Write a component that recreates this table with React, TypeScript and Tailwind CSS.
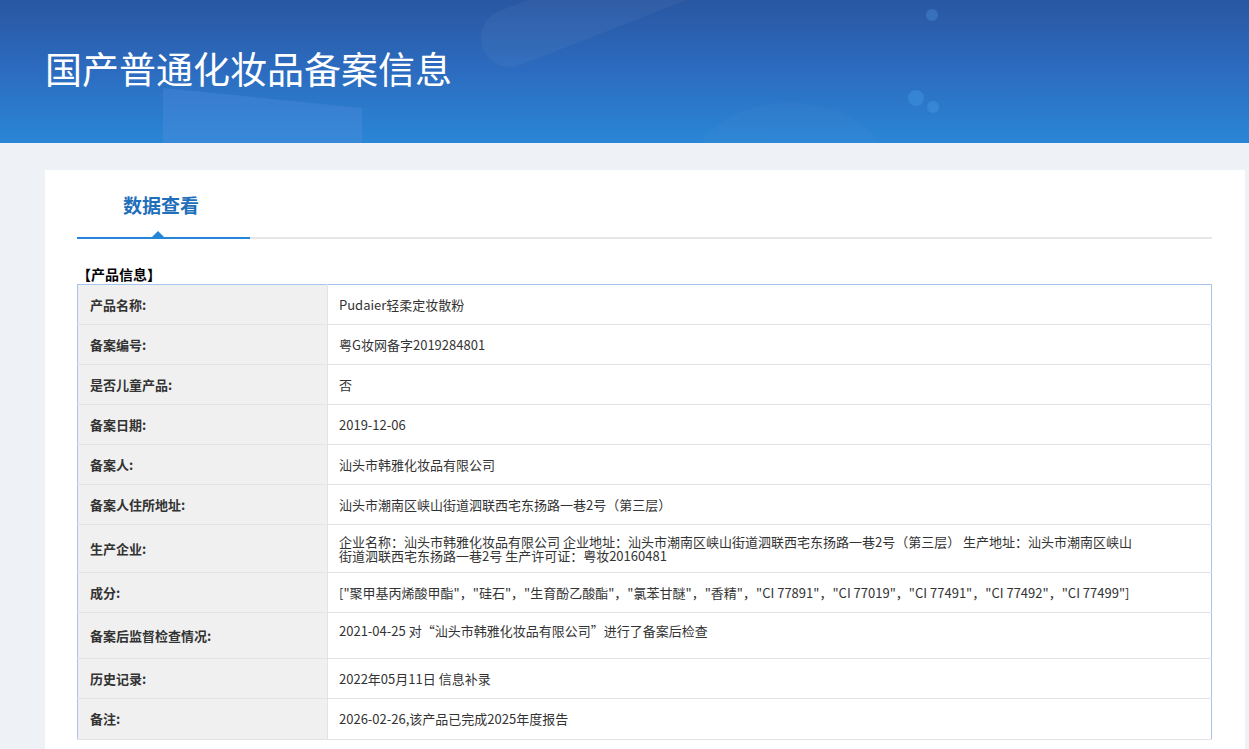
import React from 'react';

// Rows of the product record
const rows: { label: string; value: React.ReactNode; h?: string; top?: boolean }[] = [
  { label: '产品名称:', value: 'Pudaier轻柔定妆散粉' },
  { label: '备案编号:', value: '粤G妆网备字2019284801' },
  { label: '是否儿童产品:', value: '否' },
  { label: '备案日期:', value: '2019-12-06' },
  { label: '备案人:', value: '汕头市韩雅化妆品有限公司' },
  { label: '备案人住所地址:', value: '汕头市潮南区峡山街道泗联西宅东扬路一巷2号（第三层）' },
  {
    label: '生产企业:',
    value:
      '企业名称：汕头市韩雅化妆品有限公司 企业地址：汕头市潮南区峡山街道泗联西宅东扬路一巷2号（第三层） 生产地址：汕头市潮南区峡山街道泗联西宅东扬路一巷2号 生产许可证：粤妆20160481',
    h: 'h-[48px]',
  },
  {
    label: '成分:',
    value:
      '["聚甲基丙烯酸甲酯"，"硅石"，"生育酚乙酸酯"，"氯苯甘醚"，"香精"，"CI 77891"，"CI 77019"，"CI 77491"，"CI 77492"，"CI 77499"]',
  },
  {
    label: '备案后监督检查情况:',
    value: '2021-04-25 对“汕头市韩雅化妆品有限公司”进行了备案后检查',
    h: 'h-[46px]',
    top: true,
  },
  { label: '历史记录:', value: '2022年05月11日 信息补录' },
  { label: '备注:', value: '2026-02-26,该产品已完成2025年度报告', h: 'h-[41px]' },
];

function Header() {
  return (
    <div className="relative h-[143px] overflow-hidden bg-gradient-to-b from-[#2957a2] via-[#2c6cc0] to-[#2a86d6]">
      {/* faint background art */}
      <svg className="absolute inset-0" width="1249" height="143" viewBox="0 0 1249 143">
        <line x1="510" y1="38" x2="760" y2="-60" stroke="#ffffff" strokeWidth="58" strokeLinecap="round" opacity="0.035" />
        <polygon points="163,88 362,108 362,143 163,143" fill="#5a93e2" opacity="0.3" />
        <ellipse cx="790" cy="165" rx="95" ry="62" fill="#ffffff" opacity="0.02" />
        <circle cx="932" cy="15" r="6" fill="#5aa3ea" opacity="0.3" />
        <circle cx="916" cy="98" r="8" fill="#4aa0ea" opacity="0.35" />
        <circle cx="933" cy="107" r="6" fill="#4aa0ea" opacity="0.35" />
      </svg>
      <h1 className="relative pl-[45px] pt-[44px] text-[37px] leading-[48px] text-white">
        国产普通化妆品备案信息
      </h1>
    </div>
  );
}

export default function App() {
  return (
    <div
      className="min-h-[749px] bg-[#eef1f5] text-[#333]"
      style={{ fontFamily: '"Noto Sans CJK SC", "Noto Sans", sans-serif' }}
    >
      <Header />
      <div className="pt-[27px] pl-[45px] pr-[4px]">
        <div className="bg-white w-[1200px] pl-[32px] pr-[33px] pt-[20px] pb-[20px]">
          {/* tab bar */}
          <div className="flex items-end">
            <div className="relative w-[173px]">
              <div className="pl-[46px] pb-[17px] text-[19px] leading-[30px] font-bold text-[#1f6fba]">数据查看</div>
              <div className="h-[2px] bg-[#2585d8]" />
              <div className="absolute left-[75px] bottom-[2px] w-0 h-0 border-l-[6px] border-r-[6px] border-b-[6px] border-l-transparent border-r-transparent border-b-[#2585d8]" />
            </div>
            <div className="flex-1 h-[2px] bg-[#e6e6e6]" />
          </div>

          <div className="mt-[25px] text-[14px] leading-[20px] font-bold text-black">【产品信息】</div>

          <table className="w-full border-collapse border border-[#a7c4ea] text-[13px]">
            <tbody>
              {rows.map((r) => (
                <tr key={r.label} className="border-b border-[#e3e3e3]">
                  <td
                    className={`${r.h || 'h-[40px]'} w-[250px] bg-[#f0f0f0] pl-[12px] font-bold border-r border-[#e3e3e3] leading-[16px]`}
                  >
                    {r.label}
                  </td>
                  <td
                    className={`${r.h || 'h-[40px]'} pl-[11px] pr-[66px] leading-[14px] ${
                      r.top ? 'align-top pt-[11px]' : ''
                    }`}
                  >
                    {r.value}
                  </td>
                </tr>
              ))}
            </tbody>
          </table>
        </div>
      </div>
    </div>
  );
}
